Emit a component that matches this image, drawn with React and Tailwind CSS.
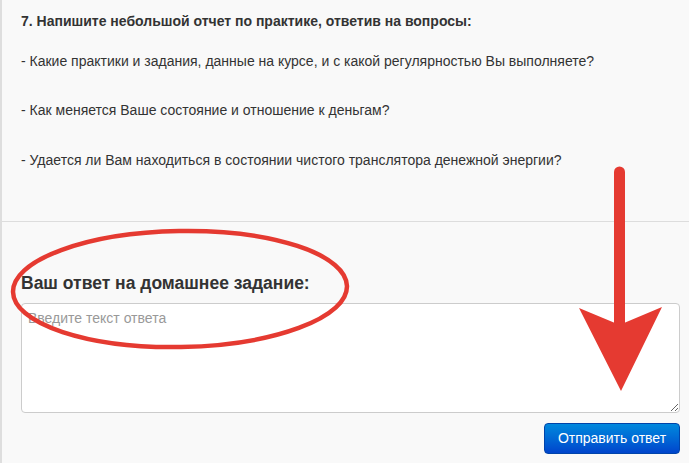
export default function App() {
  return (
    <div className="relative w-[689px] h-[463px] overflow-hidden bg-[#f9f9f9] border-l-2 border-[#dedede] text-[#333] font-['Liberation_Sans',Arial,sans-serif]">
      <div className="pl-[19px] pr-4 pt-[11px] pb-[51px] border-b border-[#dddddd] text-[14px] leading-[20px]">
        <p className="font-bold">7. Напишите небольшой отчет по практике, ответив на вопросы:</p>
        <p className="mt-[20px]">- Какие практики и задания, данные на курсе, и с какой регулярностью Вы выполняете?</p>
        <p className="mt-[29px]">- Как меняется Ваше состояние и отношение к деньгам?</p>
        <p className="mt-[30px]">- Удается ли Вам находиться в состоянии чистого транслятора денежной энергии?</p>
      </div>
      <div className="pl-[19px] pr-[8px] pt-[49px]">
        <h3 className="font-bold text-[17.5px] leading-[24px]">Ваш ответ на домашнее задание:</h3>
        <textarea
          placeholder="Введите текст ответа"
          className="mt-[8px] block w-[659px] h-[110px] bg-white border border-[#cccccc] rounded-[4px] px-[6px] py-[4px] text-[14px] leading-[20px] placeholder:text-[#999] resize-y"
        />
        <div className="flex justify-end w-[659px] mt-[10px]">
          <button className="h-[31px] px-[12px] w-[136px] rounded-[4px] text-white text-[14px] bg-gradient-to-b from-[#0088dd] to-[#0044cc] border border-[#0044aa]">
            Отправить ответ
          </button>
        </div>
      </div>
      <svg className="absolute left-0 top-0 pointer-events-none" width="689" height="463" viewBox="0 0 689 463">
        <ellipse cx="178" cy="289" rx="167" ry="58" fill="none" stroke="#e53a31" strokeWidth="4.5" transform="rotate(-1 178 289)" />
        <line x1="617.5" y1="172" x2="617.5" y2="330" stroke="#e53a31" strokeWidth="11" strokeLinecap="round" />
        <polygon points="577,308 613,323 622,323 660,307 619,391" fill="#e53a31" />
      </svg>
    </div>
  );
}
